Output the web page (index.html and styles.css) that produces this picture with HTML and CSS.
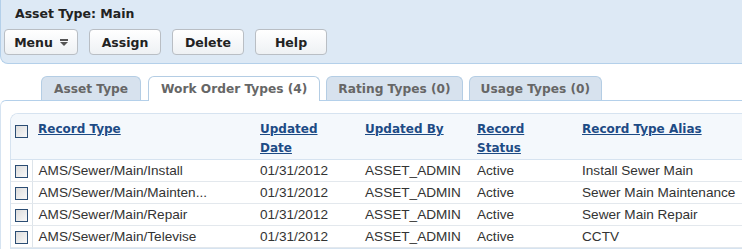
FILE: index.html
```html
<!DOCTYPE html>
<html lang="en">
<head>
    <meta charset="UTF-8">
    <title>Asset Type: Main</title>
    <link rel="stylesheet" href="styles.css">
</head>
<body>
    <div class="page-header">
        <h1>Asset Type: Main</h1>
        <div class="toolbar">
            <button class="tool-button menu-button">Menu
                <svg width="8" height="7" viewBox="0 0 8 7"><rect x="0" y="0" width="8" height="2" fill="#555"/><path d="M0 3 H8 L4 7 Z" fill="#555"/></svg>
            </button>
            <button class="tool-button">Assign</button>
            <button class="tool-button">Delete</button>
            <button class="tool-button">Help</button>
        </div>
    </div>

    <div class="tabs">
        <div class="tab">Asset Type</div>
        <div class="tab active">Work Order Types (4)</div>
        <div class="tab">Rating Types (0)</div>
        <div class="tab">Usage Types (0)</div>
    </div>

    <div class="tab-panel">
        <div class="grid-box">
            <table class="grid">
                <thead>
                    <tr>
                        <th class="check-col"><span class="check"></span></th>
                        <th class="col-type"><a href="#">Record Type</a></th>
                        <th class="col-date"><a href="#">Updated<br>Date</a></th>
                        <th class="col-by"><a href="#">Updated By</a></th>
                        <th class="col-status"><a href="#">Record<br>Status</a></th>
                        <th class="col-alias"><a href="#">Record Type Alias</a></th>
                    </tr>
                </thead>
                <tbody>
                    <tr>
                        <td class="check-col"><span class="check"></span></td>
                        <td>AMS/Sewer/Main/Install</td>
                        <td>01/31/2012</td>
                        <td>ASSET_ADMIN</td>
                        <td>Active</td>
                        <td>Install Sewer Main</td>
                    </tr>
                    <tr>
                        <td class="check-col"><span class="check"></span></td>
                        <td>AMS/Sewer/Main/Mainten...</td>
                        <td>01/31/2012</td>
                        <td>ASSET_ADMIN</td>
                        <td>Active</td>
                        <td>Sewer Main Maintenance</td>
                    </tr>
                    <tr>
                        <td class="check-col"><span class="check"></span></td>
                        <td>AMS/Sewer/Main/Repair</td>
                        <td>01/31/2012</td>
                        <td>ASSET_ADMIN</td>
                        <td>Active</td>
                        <td>Sewer Main Repair</td>
                    </tr>
                    <tr>
                        <td class="check-col"><span class="check"></span></td>
                        <td>AMS/Sewer/Main/Televise</td>
                        <td>01/31/2012</td>
                        <td>ASSET_ADMIN</td>
                        <td>Active</td>
                        <td>CCTV</td>
                    </tr>
                </tbody>
            </table>
        </div>
    </div>
</body>
</html>
```

FILE: styles.css
```css
body {
    margin: 0;
    font-family: "DejaVu Sans", Verdana, sans-serif;
    background: #fff;
    overflow: hidden;
    width: 742px;
}
.page-header {
    background-color: #dde9f5;
    border-bottom: 1px solid #b4d0ea;
    border-left: 1px solid #b4d0ea;
    border-bottom-left-radius: 8px;
    height: 63px;
    box-sizing: content-box;
}
.page-header h1 {
    margin: 0;
    padding: 5px 0 0 14px;
    font-size: 12.5px;
    line-height: 17px;
    font-weight: bold;
    color: #222;
}
.toolbar {
    display: flex;
    gap: 11px;
    padding: 7px 0 0 3px;
}
.tool-button {
    height: 26px;
    min-width: 72px;
    padding: 0 10px;
    border: 1px solid #b9bec4;
    border-radius: 4px;
    background: linear-gradient(#ffffff, #eef1f4);
    font-family: "DejaVu Sans", Verdana, sans-serif;
    font-weight: bold;
    font-size: 12.5px;
    color: #222;
    display: flex;
    align-items: center;
    justify-content: center;
    gap: 7px;
}
.menu-button {
    min-width: 74px;
    padding: 0 9px;
}
.tabs {
    display: flex;
    gap: 6px;
    padding: 12px 0 0 41px;
    height: 24px;
}
.tab {
    height: 23px;
    line-height: 24px;
    padding: 0 11px;
    background-color: #d7e2ee;
    border: 1px solid #b4cde4;
    border-bottom: none;
    border-radius: 6px 6px 0 0;
    font-weight: bold;
    font-size: 12.2px;
    color: #666;
}
.tab.active {
    background-color: #fff;
    height: 24px;
    margin-bottom: -1px;
    padding: 0 12px;
}
.tab:first-child {
    padding: 0 12px;
    margin-right: 1px;
}
.tab-panel {
    border-top: 1px solid #b4d0ea;
    border-left: 1px solid #d5e3f1;
    border-top-left-radius: 6px;
    padding: 12px 0 0 9px;
}
.grid-box {
    border: 1px solid #d6e3f0;
    border-right: none;
    border-top-left-radius: 8px;
    overflow: hidden;
    width: 760px;
}
.grid {
    border-collapse: collapse;
    width: 760px;
    table-layout: fixed;
    font-family: "Liberation Sans", Arial, sans-serif;
    font-size: 13.6px;
    color: #333;
}
.grid thead tr {
    background-color: #f4f8fc;
}
.grid th {
    text-align: left;
    vertical-align: top;
    padding: 6px 0 0 6px;
    height: 37px;
    line-height: 19px;
    font-family: "DejaVu Sans", Verdana, sans-serif;
    font-size: 12px;
    border-bottom: 1px solid #d6e3f0;
}
.grid th a {
    color: #1d4b85;
    text-decoration: underline;
}
.grid td {
    height: 21px;
    padding: 0 0 0 6px;
    border-bottom: 1px solid #e3e8ed;
    white-space: nowrap;
    line-height: 21px;
}
.grid .check-col {
    width: 21px;
    padding: 0;
    text-align: center;
}
.grid th.check-col {
    padding-top: 8px;
}
.grid td.check-col {
    border-right: 1px solid #dde4ea;
}
.col-type { width: 216px; }
.col-date { width: 99px; }
.col-by { width: 106px; }
.col-status { width: 99px; }
.col-alias { width: 190px; }
.check {
    display: inline-block;
    width: 11px;
    height: 11px;
    border: 1px solid #2b4d74;
    background: linear-gradient(135deg, #dcdcdc, #f8f8f8);
    vertical-align: middle;
}
```
